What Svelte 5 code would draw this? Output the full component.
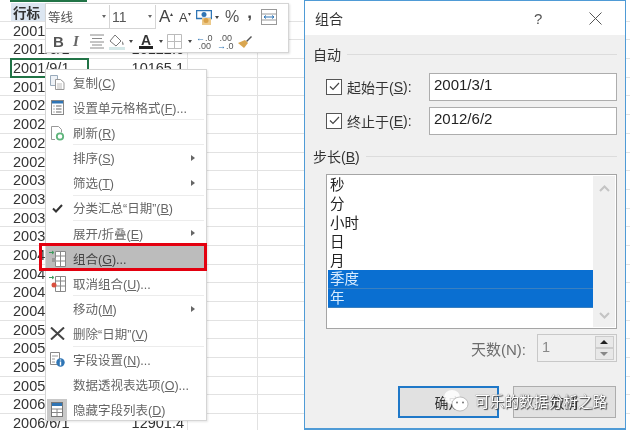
<script>
  const dates = [];
  for (let y = 2001; y <= 2006; y++) for (const m of [3, 6, 9, 12]) if (y < 2006 || m <= 6) dates.push(`${y}/${m}/1`);
  const vals = { 1: '10122.6', 2: '10165.1', 21: '12901.4' };
  const items = [
    { t: '复制(', k: 'C', e: ')', i: 'copy' },
    { t: '设置单元格格式(', k: 'F', e: ')...', i: 'fmt', sep: true },
    { t: '刷新(', k: 'R', e: ')', i: 'refresh', sep: true },
    { t: '排序(', k: 'S', e: ')', sub: true },
    { t: '筛选(', k: 'T', e: ')', sub: true, sep: true },
    { t: '分类汇总“日期”(', k: 'B', e: ')', i: 'check', sep: true },
    { t: '展开/折叠(', k: 'E', e: ')', sub: true },
    { t: '组合(', k: 'G', e: ')...', i: 'group', hot: true },
    { t: '取消组合(', k: 'U', e: ')...', i: 'ungroup', sep: true },
    { t: '移动(', k: 'M', e: ')', sub: true },
    { t: '删除“日期”(', k: 'V', e: ')', i: 'del', sep: true },
    { t: '字段设置(', k: 'N', e: ')...', i: 'info' },
    { t: '数据透视表选项(', k: 'O', e: ')...' },
    { t: '隐藏字段列表(', k: 'D', e: ')', i: 'list', boxed: true }
  ];
  const units = ['秒', '分', '小时', '日', '月', '季度', '年'];
</script>

<div class="root">
  <div class="sheet">
    <div class="colbar"></div>
    <div class="row head"><div class="a">行标</div><div class="b"></div><div class="c"></div><div class="d"></div></div>
    {#each dates as d, i}
      <div class="row" class:sel={i === 2}>
        <div class="a">{d}</div><div class="b">{vals[i] ?? ''}</div><div class="c"></div><div class="d"></div>
      </div>
    {/each}
  </div>

  <div class="toolbar">
    <div class="tline">
      <div class="combo font">等线<span class="dd"></span></div>
      <div class="combo size">11<span class="dd"></span></div>
      <span class="big">A<sup>▴</sup></span>
      <span class="small">A<sup>▾</sup></span>
      <svg class="ic" width="16" height="15" viewBox="0 0 16 15"><rect x=".5" y=".5" width="15" height="8" fill="#fff" stroke="#2f75b5" stroke-width="1.500"/><circle cx="8" cy="4.500" r="2.500" fill="#2f75b5"/><rect x="6" y="8" width="9" height="7" fill="#ecc98a"/><circle cx="10" cy="10.500" r="2.500" fill="#d9a24a"/></svg>
      <span class="dd dark d1"></span>
      <span class="pct">%</span>
      <span class="comma">,</span>
      <svg class="ic2" width="16" height="16" viewBox="0 0 16 16"><rect x=".5" y=".5" width="15" height="15" fill="#fff" stroke="#999"/><path d="M1 5h14M1 11h14" stroke="#999"/><path d="M3 8h10M3 8l2-1.500M3 8l2 1.500M13 8l-2-1.500M13 8l-2 1.500" stroke="#2f75b5" fill="none"/></svg>
    </div>
    <div class="tline two">
      <b class="bb">B</b>
      <i class="ii">I</i>
      <svg class="al" width="14" height="15" viewBox="0 0 14 15"><path d="M0 1h14M2 4.500h10M0 8h14M2 11h10M0 14h14" stroke="#8a8a8a"/></svg>
      <svg class="bk" width="16" height="16" viewBox="0 0 16 16"><path d="M6 1l6 6-5 5-6-5z" fill="#fff" stroke="#777"/><path d="M13 7c2 2 2 4 1 4s-1-2-1-4z" fill="#888"/><rect x="0" y="13" width="16" height="3" fill="#d5e8e8"/></svg>
      <span class="dd dark m4"></span>
      <span class="fa">A</span>
      <span class="dd dark m6"></span>
      <svg class="gr" width="15" height="15" viewBox="0 0 15 15"><path d="M.5.500h14v14H.5zM7.500.500v14M.5 7.500h14" fill="none" stroke="#bbb"/></svg>
      <span class="dd dark m6"></span>
      <span class="dec d-a"><span><em>←</em>.0</span><span>.00</span></span>
      <span class="dec d-b"><span>.00</span><span><em>→</em>.0</span></span>
      <svg class="br" width="16" height="14" viewBox="0 0 16 14"><path d="M9 6l5-5 1 1-5 5z" fill="#555"/><path d="M1 8l7-3 3 3-4 5z" fill="#d9a650"/></svg>
    </div>
  </div>

  <div class="menu">
    {#each items as it}
      <div class="item" class:hot={it.hot}>
        <div class="micon" class:boxed={it.boxed}>
          {#if it.i === 'copy'}
            <svg width="15" height="15" viewBox="0 0 15 15"><path d="M.5.500h7v10h-7z" fill="#eef2f7" stroke="#9ab"/><path d="M5.500 4.500h5l3.500 3v7H5.500z" fill="#fff" stroke="#999"/><path d="M7 9h5M7 11h5M7 13h5" stroke="#bbb"/></svg>
          {:else if it.i === 'fmt'}
            <svg width="13" height="15" viewBox="0 0 13 15"><rect x=".5" y=".5" width="12" height="14" fill="#fff" stroke="#888"/><rect x="1" y="1" width="11" height="2.500" fill="#2f75b5"/><path d="M2.500 6h1M5 6h5.500M2.500 9h1M5 9h5.500M2.500 12h1M5 12h5.500" stroke="#666"/></svg>
          {:else if it.i === 'refresh'}
            <svg width="15" height="16" viewBox="0 0 15 16"><path d="M1.500 1.500h7l3 3v3M5 14.500H1.500v-13" fill="#fff" stroke="#999"/><circle cx="10" cy="11.500" r="3.200" fill="none" stroke="#5fb57c" stroke-width="1.800"/></svg>
          {:else if it.i === 'check'}
            <svg width="11" height="9" viewBox="0 0 11 9"><path d="M1 4.500l3 3L10 1" fill="none" stroke="#333" stroke-width="2"/></svg>
          {:else if it.i === 'group' || it.i === 'ungroup'}
            <svg width="17" height="17" viewBox="0 0 17 17"><path d="M6.500 1.500h10v15h-10z" fill="#fff" stroke="#888"/><path d="M6.500 6h10M6.500 11h10M11.500 1.500v15" stroke="#888"/><path d="M0 2.500h4M3 1l2 1.500L3 4" stroke="#3a9a5b" fill="none"/>{#if it.i === 'group'}<rect x="3" y="8" width="4" height="4" fill="#999"/>{:else}<circle cx="5" cy="10" r="2.500" fill="#d9503f"/>{/if}</svg>
          {:else if it.i === 'del'}
            <svg width="15" height="13" viewBox="0 0 15 13"><path d="M1 .5l13 12M14 .5l-13 12" stroke="#444" stroke-width="2"/></svg>
          {:else if it.i === 'info'}
            <svg width="15" height="15" viewBox="0 0 15 15"><path d="M.5.500h9v12h-9z" fill="#fff" stroke="#888"/><path d="M2 4h6M2 7h3M2 10h3" stroke="#999"/><circle cx="10.500" cy="10.500" r="4.200" fill="#2f75b5"/><path d="M10.500 9.500v4M10.500 7.500v1" stroke="#fff" stroke-width="1.400"/></svg>
          {:else if it.i === 'list'}
            <svg width="12" height="15" viewBox="0 0 12 15"><rect x=".5" y=".5" width="11" height="14" fill="#fff" stroke="#777"/><rect x="1" y="1" width="10" height="3" fill="#2f75b5"/><path d="M1 7h10M1 10.500h10M6 7v7" stroke="#888"/></svg>
          {/if}
        </div>
        <div class="mtext" class:line={it.sep}><span>{it.t}<u>{it.k}</u>{it.e}</span>{#if it.sub}<span class="arrow"></span>{/if}</div>
      </div>
    {/each}
  </div>
  <div class="redbox"></div>

  <div class="dialog">
    <div class="title"><span>组合</span><span class="q">?</span>
      <svg class="x" width="13" height="13" viewBox="0 0 13 13"><path d="M.5.500l12 12M12.500.500l-12 12" stroke="#555"/></svg>
    </div>
    <div class="body">
      <div class="legend first"><span>自动</span></div>
      <div class="frow">
        <label class="lab"><span class="cb"><svg width="11" height="9" viewBox="0 0 11 9"><path d="M1 4.500l3 3L10 1" fill="none" stroke="#444" stroke-width="1.200"/></svg></span>起始于(<u>S</u>):</label>
        <div class="inp">2001/3/1</div>
      </div>
      <div class="frow">
        <label class="lab"><span class="cb"><svg width="11" height="9" viewBox="0 0 11 9"><path d="M1 4.500l3 3L10 1" fill="none" stroke="#444" stroke-width="1.200"/></svg></span>终止于(<u>E</u>):</label>
        <div class="inp">2012/6/2</div>
      </div>
      <div class="legend step"><span>步长(<u>B</u>)</span></div>
      <div class="list">
        <div class="opts">
          {#each units as u, i}<div class="opt" class:on={i > 4}>{u}</div>{/each}
        </div>
        <div class="scroll">
          <svg width="11" height="7" viewBox="0 0 11 7"><path d="M1 6l4.500-4.500L10 6" fill="none" stroke="#c4c4c4" stroke-width="2"/></svg>
          <svg width="11" height="7" viewBox="0 0 11 7"><path d="M1 1l4.500 4.500L10 1" fill="none" stroke="#c4c4c4" stroke-width="2"/></svg>
        </div>
      </div>
      <div class="days">
        <span class="dlab">天数(N):</span>
        <div class="spin"><span>1</span>
          <div class="spins"><div class="up"></div><div class="down"></div></div>
        </div>
      </div>
      <div class="btns">
        <div class="btn ok">确定</div>
        <div class="btn">取消</div>
      </div>
    </div>
  </div>

  <div class="wm">
    <svg width="26" height="23" viewBox="0 0 26 23"><ellipse cx="9" cy="8" rx="8" ry="7" fill="#fff" opacity=".85"/><ellipse cx="17" cy="15" rx="8" ry="7" fill="#fff" stroke="#999" stroke-width=".6"/><circle cx="14" cy="13.500" r="1" fill="#777"/><circle cx="20" cy="13.500" r="1" fill="#777"/></svg>
    <span>可乐的数据分析之路</span>
  </div>
</div>

<style>
  :global(body) { margin: 0; background: #fff; }
  .root {
    position: relative;
    width: 630px;
    height: 430px;
    overflow: hidden;
    background: #fff;
    font-family: "Liberation Sans", "Noto Sans CJK SC", sans-serif;
    color: #333;
    filter: blur(0.4px);
  }
  .sheet { padding-top: 3px; }
  .colbar { height: 2px; width: 77px; margin: -3px 0 1px 10px; background: #217346; }
  .row {
    display: grid;
    grid-template-columns: 11px 77px 100px 70px 1fr;
    height: 18.7px;
    box-sizing: border-box;
    border-bottom: 1px solid #e2e2e2;
    font: 14.500px/18px "Liberation Sans", sans-serif;
    color: #333;
    position: relative;
  }
  .row::before { content: ""; }
  .row .a { padding-left: 2px; white-space: nowrap; }
  .row .b { text-align: right; padding-right: 3px; border-right: 1px solid #e2e2e2; }
  .row .c { border-right: 1px solid #e2e2e2; }
  .head .a { background: #dce6f1; font-family: "Noto Sans CJK SC", sans-serif; font-weight: 700; font-size: 13.500px; }
  .sel .a { outline: 2px solid #217346; outline-offset: -1px; }

  .toolbar {
    position: absolute; left: 45px; top: 3px; width: 244px; height: 50px;
    box-sizing: border-box; background: #fff; border: 1px solid #d5d5d5;
    box-shadow: 1px 1px 2px rgba(0,0,0,.12);
    display: flex; flex-direction: column;
  }
  .tline { display: flex; align-items: center; height: 26px; flex: none; }
  .tline.two { height: 23px; padding-left: 7px; }
  .combo {
    box-sizing: border-box; height: 24px; border: 1px solid #d5d5d5; border-width: 0 1px 1px 0;
    display: flex; align-items: center; justify-content: space-between; padding: 0 3px 0 2px;
    font-size: 12.500px; color: #555; font-family: "Noto Sans CJK SC", sans-serif;
  }
  .font { width: 64px; }
  .size { width: 46px; font-family: "Liberation Sans", sans-serif; font-size: 14px; }
  .dd { display: inline-block; width: 0; height: 0; border: 2.500px solid transparent; border-top: 3px solid #666; border-bottom: 0; flex: none; }
  .dd.dark { border-top-color: #444; }
  .big { font: 17px "Liberation Sans", sans-serif; margin-left: 3px; color: #444; width: 17px; flex: none; }
  .small { font: 13px "Liberation Sans", sans-serif; margin-left: 3px; color: #444; width: 15px; flex: none; }
  sup { font-size: 6px; vertical-align: 6px; line-height: 0; }
  .ic { margin-left: 2px; flex: none; }
  .d1 { margin-left: 3px; }
  .pct { font: 16px "Liberation Sans", sans-serif; margin: 0 8px 0 6px; color: #555; flex: none; }
  .comma { font: bold 17px "Liberation Sans", sans-serif; color: #444; margin: -8px 0 0 0; flex: none; }
  .ic2 { margin-left: 9px; flex: none; }
  .bb { font: bold 15px "Liberation Sans", sans-serif; color: #555; width: 11px; flex: none; }
  .ii { font: italic bold 15px "Liberation Serif", serif; color: #666; margin-left: 9px; width: 8px; flex: none; }
  .al { margin-left: 9px; flex: none; }
  .bk { margin-left: 5px; flex: none; }
  .m4 { margin-left: 4px; }
  .m6 { margin-left: 6px; }
  .fa { font: bold 14px/12px "Liberation Sans", sans-serif; border-bottom: 3px solid #222; width: 14px; text-align: center; margin-left: 6px; color: #333; flex: none; }
  .gr { margin-left: 4px; flex: none; }
  .dec { display: flex; flex-direction: column; font: 9px/8px "Liberation Sans", sans-serif; color: #555; text-align: right; width: 15px; flex: none; }
  .dec em { color: #2f75b5; font-style: normal; }
  .d-a { margin-left: 4px; }
  .d-b { margin-left: 6px; }
  .br { margin-left: 5px; flex: none; }

  .menu {
    position: absolute; left: 45px; top: 69px; width: 162px; height: 352px;
    box-sizing: border-box; background: #fff; border: 1px solid #d5d5d5;
    box-shadow: 1px 1px 2px rgba(0,0,0,.1);
    display: flex; flex-direction: column;
  }
  .item { display: flex; height: 25.150px; align-items: stretch; flex: none; }
  .item.hot { background: #bcbcbc; }
  .micon { width: 23px; margin-right: 4px; flex: none; display: flex; align-items: center; justify-content: center; box-sizing: border-box; }
  .micon.boxed { background: #c8c8c8; margin: 2px 6px 1px 1px; width: 20px; }
  .mtext {
    flex: 1; display: flex; align-items: center; justify-content: space-between;
    font-size: 12.500px; color: #666; padding-right: 9px; white-space: nowrap; margin-right: 2px;
  }
  .hot .mtext { color: #444; }
  .mtext.line { border-bottom: 1px solid #ececec; }
  .arrow { width: 0; height: 0; border: 3.500px solid transparent; border-left: 4px solid #666; border-right: 0; }
  .redbox { position: absolute; left: 39px; top: 243px; width: 168px; height: 28px; box-sizing: border-box; border: 3px solid #e3000f; }

  .dialog {
    position: absolute; left: 304px; top: 0; width: 322px; height: 430px;
    box-sizing: border-box; border: 1px solid #4f9bd6; background: #f0f0f0;
    display: flex; flex-direction: column; border-bottom-width: 2px;
  }
  .title { height: 34px; flex: none; background: #fff; display: flex; align-items: center; padding-left: 10px; font-size: 14px; color: #333; position: relative; }
  .q { margin-left: 191px; font-family: "Liberation Sans", sans-serif; color: #555; font-size: 15px; }
  .x { margin-left: 47px; }
  .body { flex: 1; display: flex; flex-direction: column; padding: 0 8px 0 8px; }
  .legend { display: flex; align-items: center; gap: 6px; font-size: 14px; height: 20px; margin-top: 12px; color: #333; }
  .legend.first { margin-top: 9px; margin-bottom: 8px; }
  .legend.step { margin-top: 6px; }
  .legend::after { content: ""; flex: 1; height: 1px; background: #dcdcdc; }
  .frow { display: flex; align-items: center; height: 29px; margin-bottom: 5px; padding-left: 13px; }
  .lab { width: 103px; display: flex; align-items: center; font-size: 14px; color: #333; white-space: nowrap; }
  .cb { box-sizing: border-box; width: 16px; height: 16px; border: 1px solid #555; background: #fff; margin-right: 5px; display: flex; align-items: center; justify-content: center; }
  .inp { box-sizing: border-box; flex: 1; height: 28px; border: 1px solid #adadad; background: #fff; padding: 0 4px; font: 15px/22px "Liberation Sans", sans-serif; color: #222; }
  .list { box-sizing: border-box; margin: 8px 0 0 13px; height: 155px; border: 1px solid #a5a5a5; background: #fff; display: flex; padding: 1px; flex: none; }
  .opts { flex: 1; }
  .opt { height: 18.900px; font-size: 14.500px; line-height: 18.900px; padding-left: 2px; color: #222; box-sizing: border-box; }
  .opt.on { background: #0a6fd1; color: #d8ecff; border-bottom: 1px solid #3a80c0; }
  .scroll { width: 22px; background: #f0f0f0; display: flex; flex-direction: column; justify-content: space-between; align-items: center; padding: 9px 0 8px; box-sizing: border-box; }
  .days { display: flex; justify-content: flex-end; align-items: center; margin-top: 5px; height: 28px; }
  .dlab { font: 15px "Liberation Sans", "Noto Sans CJK SC", sans-serif; color: #6d6d6d; margin-right: 11px; }
  .spin { box-sizing: border-box; width: 80px; height: 28px; border: 1px solid #c8c8c8; background: #f0f0f0; display: flex; justify-content: space-between; padding-left: 4px; font: 14.500px/24px "Liberation Sans", sans-serif; color: #888; }
  .spins { width: 19px; margin: 1px 2px; display: flex; flex-direction: column; }
  .up, .down { flex: 1; background: #e8e8e8; border: 1px solid #ccc; position: relative; }
  .up::after, .down::after { content: ""; position: absolute; left: 4px; top: 3px; border: 4px solid transparent; }
  .up::after { border-bottom: 4px solid #222; border-top: 0; }
  .down::after { border-top: 4px solid #888; border-bottom: 0; }
  .btns { display: flex; justify-content: flex-end; gap: 14px; margin-top: 24px; padding-right: 1px; }
  .btn { box-sizing: border-box; width: 103px; height: 32px; background: #e1e1e1; border: 1px solid #adadad; display: flex; align-items: center; justify-content: center; font-size: 14px; color: #333; }
  .btn.ok { width: 101px; border: 2px solid #1f78c8; }

  .wm { position: absolute; left: 443px; top: 389px; display: flex; align-items: center; gap: 6px; }
  .wm span { color: #fff; font-size: 14.700px; white-space: nowrap; text-shadow: 0 0 1px #333, 1px 1px 1px #444; }
</style>
